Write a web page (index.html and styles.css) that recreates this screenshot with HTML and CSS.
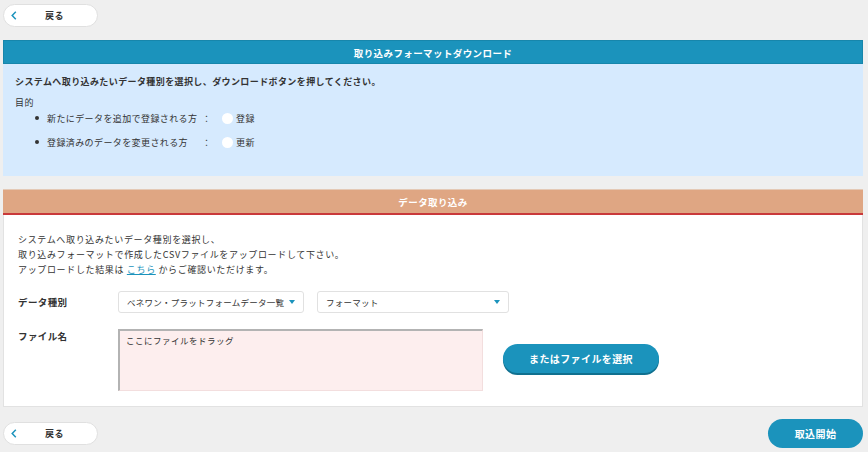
FILE: index.html
```html
<!DOCTYPE html>
<html lang="ja">
<head>
<meta charset="utf-8">
<link rel="stylesheet" href="styles.css">
</head>
<body>
<div class="page">
  <div class="top-bar">
    <button class="back-btn"><svg class="chev" width="6" height="9" viewBox="0 0 6 9"><polyline points="4.8,0.8 1.2,4.5 4.8,8.2" fill="none" stroke="#1b93bc" stroke-width="1.5"/></svg><span class="back-label">戻る</span></button>
  </div>

  <section class="panel panel-dl">
    <h2 class="panel-head head-blue">取り込みフォーマットダウンロード</h2>
    <div class="panel-body body-blue">
      <p class="lead">システムへ取り込みたいデータ種別を選択し、ダウンロードボタンを押してください。</p>
      <p class="purpose">目的</p>
      <ul class="opt-list">
        <li class="opt-row"><span class="opt-label">新たにデータを追加で登録される方</span><span class="colon">：</span><span class="radio"></span><span class="opt-val">登録</span></li>
        <li class="opt-row"><span class="opt-label">登録済みのデータを変更される方</span><span class="colon">：</span><span class="radio"></span><span class="opt-val">更新</span></li>
      </ul>
    </div>
  </section>

  <section class="panel panel-up">
    <h2 class="panel-head head-orange">データ取り込み</h2>
    <div class="panel-body body-white">
      <p class="desc">システムへ取り込みたいデータ種別を選択し、<br>取り込みフォーマットで作成したCSVファイルをアップロードして下さい。<br>アップロードした結果は <a class="link" href="#">こちら</a> からご確認いただけます。</p>
      <div class="form-row row-type">
        <div class="f-label">データ種別</div>
        <div class="select sel-1"><span>ベネワン・プラットフォームデータ一覧</span><span class="caret"></span></div>
        <div class="select sel-2"><span>フォーマット</span><span class="caret"></span></div>
      </div>
      <div class="form-row row-file">
        <div class="f-label">ファイル名</div>
        <div class="drop">ここにファイルをドラッグ</div>
        <button class="pick-btn">またはファイルを選択</button>
      </div>
    </div>
  </section>

  <div class="bottom-bar">
    <button class="back-btn"><svg class="chev" width="6" height="9" viewBox="0 0 6 9"><polyline points="4.8,0.8 1.2,4.5 4.8,8.2" fill="none" stroke="#1b93bc" stroke-width="1.5"/></svg><span class="back-label">戻る</span></button>
    <button class="start-btn">取込開始</button>
  </div>
</div>
</body>
</html>
```

FILE: styles.css
```css
* { box-sizing: border-box; }
html, body { margin: 0; padding: 0; }
body {
  background: #efefef;
  font-family: "Noto Sans CJK JP", "Noto Sans", sans-serif;
  font-size: 9px;
  color: #333;
  letter-spacing: 0.4px;
}
.page {
  width: 868px;
  padding: 4px 5px 0 3px;
}
p, ul, h2 { margin: 0; padding: 0; }
button { font-family: inherit; letter-spacing: inherit; cursor: pointer; }

.top-bar { height: 22px; }

.back-btn {
  width: 95px;
  height: 23px;
  background: #fff;
  border: 1px solid #e0e0e0;
  border-radius: 12px;
  display: flex;
  align-items: center;
  padding: 0 0 0 7px;
  color: #333;
}
.chev {
  display: block;
  flex: none;
}
.back-label {
  font-weight: bold;
  font-size: 9px;
  margin-left: 28px;
}

.panel {
  width: 860px;
}
.panel-dl { margin-top: 14px; }
.panel-up { margin-top: 13px; border: 1px solid #e2e2e2; border-top: 0; }

.panel-head {
  height: 24px;
  line-height: 24px;
  text-align: center;
  color: #fff;
  font-size: 9.5px;
  font-weight: bold;
}
.head-blue {
  background: #1b93bc;
  border: 1px solid #1786ab;
}
.head-orange {
  background: #dfa683;
  border-top: 1px solid #e4c9b6;
  height: 26px;
  line-height: 25px;
  border-bottom: 2px solid #c9393a;
  margin: 0 -1px;
}

.body-blue {
  background: #d6eafe;
  height: 112px;
  padding: 11px 12px;
}
.lead {
  font-weight: bold;
  line-height: 14px;
  font-size: 9px;
}
.purpose {
  margin-top: 7px;
  line-height: 14px;
}
.opt-list {
  list-style: none;
  display: flex;
  flex-direction: column;
  gap: 8px;
  padding-left: 20px;
}
.opt-row {
  display: flex;
  align-items: center;
  height: 16px;
}
.opt-row::before {
  content: "";
  width: 4px;
  height: 4px;
  border-radius: 50%;
  background: #333;
  margin-right: 8px;
}
.opt-label { width: 155px; }
.colon { width: 20px; }
.radio {
  width: 11px;
  height: 11px;
  border-radius: 50%;
  background: #fff;
  margin-right: 3px;
}

.body-white {
  background: #fff;
  height: 191px;
  padding: 17px 14px 0 14px;
}
.desc {
  line-height: 15px;
  font-size: 9px;
  letter-spacing: 0.65px;
}
.link {
  color: #1b93bc;
  text-decoration: underline;
}

.form-row {
  display: flex;
}
.row-type {
  margin-top: 14px;
  align-items: center;
  height: 22px;
}
.f-label {
  width: 100px;
  font-weight: bold;
  font-size: 9.5px;
}
.select {
  height: 22px;
  background: #fff;
  border: 1px solid #e1e1e1;
  border-radius: 3px;
  display: flex;
  align-items: center;
  justify-content: space-between;
  padding: 0 8px 0 8px;
  font-size: 8.5px;
  letter-spacing: 0.25px;
  white-space: nowrap;
}
.sel-1 { width: 186px; }
.sel-2 { width: 192px; margin-left: 13px; }
.caret {
  flex: none;
  width: 0;
  height: 0;
  border-left: 3.5px solid transparent;
  border-right: 3.5px solid transparent;
  border-top: 4px solid #1b93bc;
}

.row-file {
  margin-top: 16px;
  align-items: flex-start;
}
.row-file .f-label { line-height: 14px; }
.drop {
  width: 365px;
  height: 62px;
  background: #fdeeee;
  border-top: 2px solid #b3b3b3;
  border-left: 2px solid #b3b3b3;
  border-right: 1px solid #f3dede;
  border-bottom: 1px solid #f3dede;
  padding: 2px 6px;
  line-height: 14px;
  font-size: 8.5px;
  letter-spacing: 0.5px;
}
.pick-btn {
  margin-left: 20px;
  margin-top: 15px;
  width: 156px;
  height: 29px;
  border: 0;
  border-radius: 15px;
  background: #1b93bc;
  box-shadow: 0 2px 0 #10708f;
  color: #fff;
  font-weight: bold;
  font-size: 10px;
}

.bottom-bar {
  margin-top: 12px;
  width: 860px;
  display: flex;
  justify-content: space-between;
  align-items: center;
}
.start-btn {
  width: 95px;
  height: 29px;
  border: 0;
  border-radius: 15px;
  background: #1b93bc;
  color: #fff;
  font-weight: bold;
  font-size: 10px;
}
```
